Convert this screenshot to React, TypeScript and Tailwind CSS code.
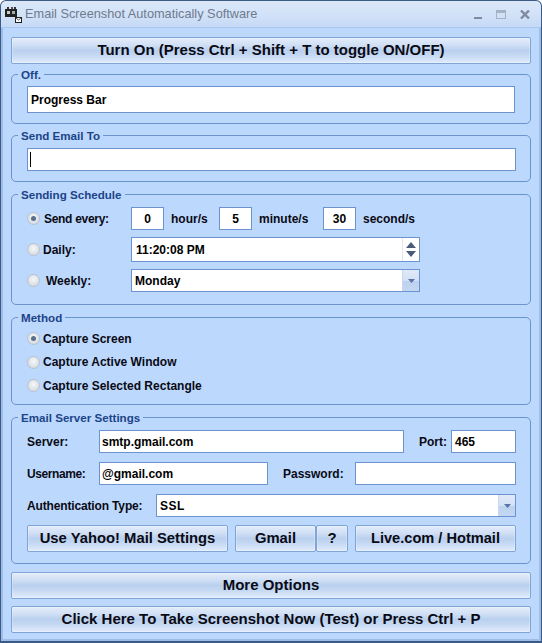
import React from "react";

const btn =
  "flex items-center justify-center border border-[#7fa5d6] rounded-[2px] bg-[linear-gradient(180deg,#e3ecf9_0%,#d3e1f5_25%,#b9d0ee_50%,#c6d9f3_70%,#e1ecfb_100%)] font-bold text-[#0a0a14] shadow-[inset_0_0_0_1px_rgba(255,255,255,0.25)]";
const input = "flex items-center bg-white border border-[#6a93cf] font-bold text-[12px] text-black";
const label = "font-bold text-[12px] text-[#0a0a14] whitespace-nowrap";

function Group({ title, className, children }: { title: string; className: string; children: React.ReactNode }) {
  return (
    <div className={`relative mx-2 border border-[#6a93cf] rounded-[5px] ${className}`}>
      <span className="absolute left-[6px] top-[-7px] bg-[#bcd8fd] px-[3px] text-[11.6px] leading-[14px] font-bold text-[#1c4488] whitespace-nowrap">
        {title}
      </span>
      {children}
    </div>
  );
}

function Radio({ on }: { on?: boolean }) {
  return (
    <span className="flex items-center justify-center w-[13px] h-[13px] -ml-[1px] rounded-full border border-[#b9c1cc] bg-[radial-gradient(circle_at_50%_40%,#f6f8fa,#cdd3da)] shrink-0">
      {on && <span className="w-[5px] h-[5px] rounded-full bg-[#5b6f8e]" />}
    </span>
  );
}

function Arrow() {
  return (
    <span className="flex items-center justify-center w-[17px] h-full bg-[linear-gradient(180deg,#dfe9f8_0%,#d3e1f5_50%,#bcd2ee_52%,#c4d7f2_100%)] border-l border-[#c8d8ee] ml-auto">
      <svg width="7" height="4" viewBox="0 0 7 4"><path d="M0 0h7L3.5 4z" fill="#5a74a8" /></svg>
    </span>
  );
}

export default function App() {
  return (
    <div className="w-[542px] h-[643px] overflow-hidden flex flex-col bg-[#3c5a86] rounded-t-[6px] font-['Liberation_Sans',Arial,sans-serif]">
      {/* title bar */}
      <div className="h-[27px] mx-px mt-px shrink-0 flex items-center rounded-t-[5px] bg-[linear-gradient(180deg,#dbe8f9_0%,#d4e3f8_40%,#c6daf6_100%)] border-b border-[#a9c6ec] pl-[4px] pr-[11px]">
        <svg width="17" height="17" viewBox="0 0 17 17" className="shrink-0">
          <rect x="0" y="3" width="12" height="8" fill="#222" />
          <rect x="2" y="1" width="2" height="2" fill="#333" />
          <rect x="6" y="1" width="2" height="2" fill="#555" />
          <rect x="9" y="1" width="2" height="2" fill="#333" />
          <rect x="2" y="5" width="3" height="3" fill="#ccc" />
          <rect x="7" y="5" width="3" height="3" fill="#aaa" />
          <rect x="10.5" y="11.5" width="6" height="5" fill="#fff" stroke="#222" />
          <path d="M11 12l2.500 2 2.500-2" fill="none" stroke="#222" strokeWidth="0.8" />
        </svg>
        <span className="ml-[3px] text-[12.75px] text-[#6f7a8c] whitespace-nowrap">
          Email Screenshot Automatically Software
        </span>
        <div className="ml-auto flex items-center gap-[14px]">
          <svg width="8" height="9" viewBox="0 0 8 9"><rect x="0" y="7" width="8" height="2" fill="#7f8b9d" /></svg>
          <svg width="10" height="9" viewBox="0 0 10 9"><rect x="0.500" y="0.500" width="9" height="8" fill="none" stroke="#a6b2c4" /><rect x="0" y="0" width="10" height="3" fill="#a6b2c4" /></svg>
          <svg width="10" height="9" viewBox="0 0 10 9"><path d="M1 0.500l8 8M9 0.500l-8 8" stroke="#7f8b9d" strokeWidth="2.400" /></svg>
        </div>
      </div>

      {/* client area */}
      <div className="mx-px mb-[2px] flex-1 flex flex-col border-x-[2px] border-b-[2px] border-[#9dbde6] bg-[#bcd8fd] min-h-0">
        <button className={`${btn} mx-2 mt-[9px] h-[27px] shrink-0 text-[15px]`}>Turn On (Press Ctrl + Shift + T to toggle ON/OFF)</button>

        <Group title="Off." className="mt-[10px] h-[50px] shrink-0 pl-[15px] pr-[15px] pt-[11px]">
          <div className={`${input} h-[27px] w-[488px] pl-[3px] text-[12.5px]`}>Progress Bar</div>
        </Group>

        <Group title="Send Email To" className="mt-[11px] h-[47px] shrink-0 pl-[15px] pt-[12px]">
          <div className={`${input} h-[23px] w-[489px] pl-[2px]`}><span className="w-px h-[15px] bg-black" /></div>
        </Group>

        <Group title="Sending Schedule" className="mt-[12px] h-[111px] shrink-0 pl-[16px] pt-[12px]">
          <div className="flex items-center h-[23px]">
            <Radio on />
            <span className={`${label} ml-[4px] w-[87px] tracking-[-0.3px]`}>Send every:</span>
            <div className={`${input} h-[23px] w-[33px] justify-center`}>0</div>
            <span className={`${label} ml-[7px] w-[48px]`}>hour/s</span>
            <div className={`${input} h-[23px] w-[33px] justify-center`}>5</div>
            <span className={`${label} ml-[7px] w-[64px]`}>minute/s</span>
            <div className={`${input} h-[23px] w-[33px] justify-center`}>30</div>
            <span className={`${label} ml-[7px]`}>second/s</span>
          </div>
          <div className="flex items-center h-[25px] mt-[7px]">
            <Radio />
            <span className={`${label} ml-[3px] w-[88px]`}>Daily:</span>
            <div className={`${input} h-[25px] w-[289px] pl-[4px] text-[12.5px]`}>
              11:20:08 PM
              <span className="ml-auto flex flex-col items-center justify-center gap-[3px] w-[17px] h-full border-l border-[#e4e8ee]">
                <svg width="10" height="6" viewBox="0 0 10 6"><path d="M5 0l5 6H0z" fill="#4c5a7c" /></svg>
                <svg width="10" height="6" viewBox="0 0 10 6"><path d="M0 0h10L5 6z" fill="#4c5a7c" /></svg>
              </span>
            </div>
          </div>
          <div className="flex items-center h-[23px] mt-[7px]">
            <Radio />
            <span className={`${label} ml-[6px] w-[85px]`}>Weekly:</span>
            <div className={`${input} h-[23px] w-[289px] pl-[3px]`}>
              Monday
              <Arrow />
            </div>
          </div>
        </Group>

        <Group title="Method" className="mt-[12px] h-[88px] shrink-0 pl-[16px] pt-[13px] flex flex-col gap-[8.500px]">
          {["Capture Screen", "Capture Active Window", "Capture Selected Rectangle"].map((t, i) => (
            <div key={t} className="flex items-center h-[15px]">
              <Radio on={i === 0} />
              <span className={`${label} ml-[3px]`}>{t}</span>
            </div>
          ))}
        </Group>

        <Group title="Email Server Settings" className="mt-[12px] h-[147px] shrink-0 pl-[15px] pt-[12px]">
          <div className="flex items-center h-[23px]">
            <span className={`${label} w-[72px]`}>Server:</span>
            <div className={`${input} h-[23px] w-[305px] pl-[2px]`}>smtp.gmail.com</div>
            <span className={`${label} ml-[15px] w-[32px]`}>Port:</span>
            <div className={`${input} h-[23px] w-[65px] pl-[3px]`}>465</div>
          </div>
          <div className="flex items-center h-[23px] mt-[9px]">
            <span className={`${label} w-[72px] tracking-[-0.4px]`}>Username:</span>
            <div className={`${input} h-[23px] w-[169px] pl-[2px]`}>@gmail.com</div>
            <span className={`${label} ml-[15px] w-[72px]`}>Password:</span>
            <div className={`${input} h-[23px] w-[161px]`} />
          </div>
          <div className="flex items-center h-[23px] mt-[9px]">
            <span className={`${label} w-[129px] tracking-[-0.15px]`}>Authentication Type:</span>
            <div className={`${input} h-[23px] w-[360px] pl-[3px] tracking-[0.5px]`}>
              SSL
              <Arrow />
            </div>
          </div>
          <div className="flex items-center h-[27px] mt-[8px]">
            <button className={`${btn} h-[27px] w-[201px] text-[14.8px]`}>Use Yahoo! Mail Settings</button>
            <button className={`${btn} h-[27px] w-[81px] ml-[7px] text-[14.8px]`}>Gmail</button>
            <button className={`${btn} h-[27px] w-[32px] text-[15px]`}>?</button>
            <button className={`${btn} h-[27px] w-[161px] ml-[7px] text-[14.6px]`}>Live.com / Hotmail</button>
          </div>
        </Group>

        <button className={`${btn} mx-2 mt-[8px] h-[27px] shrink-0 text-[15px]`}>More Options</button>
        <button className={`${btn} mx-2 mt-[7px] h-[27px] shrink-0 text-[15px]`}>Click Here To Take Screenshot Now (Test) or Press Ctrl + P</button>
      </div>
    </div>
  );
}
